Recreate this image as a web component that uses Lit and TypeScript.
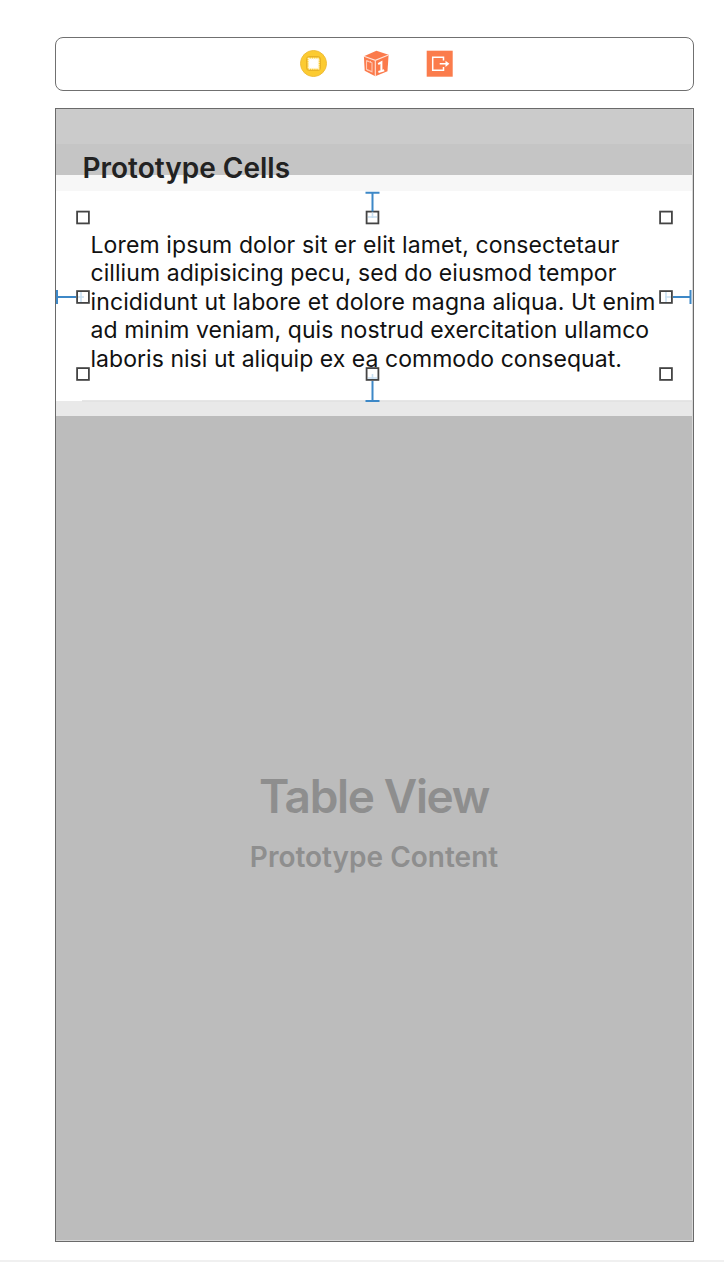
import { LitElement, html, css, svg } from "lit";
import { customElement } from "lit/decorators.js";

const LINES: [string, string][] = [
  ["Lorem ipsum dolor sit er elit lamet, consectetaur", "t1"],
  ["cillium adipisicing pecu, sed do eiusmod tempor", "t2"],
  ["incididunt ut labore et dolore magna aliqua. Ut enim", "t1"],
  ["ad minim veniam, quis nostrud exercitation ullamco", "t2"],
  ["laboris nisi ut aliquip ex ea commodo consequat.", "t3"],
];

const HANDLES = [
  [27, 26.5], [316.5, 26.5], [610, 26.5],
  [27, 106], [610, 106],
  [27, 183], [316.5, 183], [610, 183],
];

@customElement("scene-dock")
export class SceneDock extends LitElement {
  static styles = css`
    :host {
      box-sizing: border-box;
      display: flex;
      justify-content: center;
      align-items: center;
      gap: 36px;
      height: 54px;
      padding: 0 0 1px 3px;
      border: 1.5px solid #707070;
      border-radius: 8px;
      background: #fff;
    }
    svg { display: block; width: 27px; height: 27px; }
  `;
  render() {
    return html`
      <svg viewBox="0 0 27 27">
        <circle cx="13.5" cy="13.5" r="13" fill="#fccb31" stroke="#efbd3c" stroke-width="1" />
        <rect x="6.7" y="6.7" width="13.6" height="13.6" rx="2" fill="none" stroke="#e2ac25" stroke-width="1" />
        <rect x="8.6" y="8.6" width="10" height="10" fill="#fff" stroke="#fff5d2" stroke-width="1.8" stroke-dasharray="1.2 1" />
      </svg>
      <svg viewBox="0 0 27 27">
        <path d="M13.4 .8 25.6 4.8 24.5 21.3 12.2 26.2 1.7 20.8 .9 6.2Z" fill="#fb7a4b" />
        <path d="M1 6.3 12.3 10.3 25.4 5M12.3 10.3V26" fill="none" stroke="#ffe4d9" stroke-width="1.1" />
        <path d="M3.5 10.8 9 12.8V21.8L3.5 19.3Z" fill="none" stroke="#ffc9b4" stroke-width="1.1" />
        <path d="M4.8 11.5V10.3M7.5 12.4V11M5 20V21" fill="none" stroke="#ffc9b4" />
        <path d="M15.2 14.2 18.4 12.2V21.2M15.4 22 21.2 20.2" fill="none" stroke="#fff" stroke-width="2" />
      </svg>
      <svg viewBox="0 0 27 27">
        <rect x=".7" y=".7" width="26" height="26" fill="#fb7c4c" />
        <path d="M17.5 10.5V7.2H6.7V20.3H17.5V17M13.7 13.8H22" fill="none" stroke="#fff" stroke-width="1.5" />
        <path d="M19.5 10.7 23.4 13.8 19.5 16.9Z" fill="#fff" />
      </svg>
    `;
  }
}

@customElement("prototype-cell")
export class PrototypeCell extends LitElement {
  static styles = css`
    :host {
      box-sizing: border-box;
      display: block;
      position: relative;
      height: 210px;
      padding: 40px 0 0 34.5px;
      background: #fff;
    }
    .line {
      height: 28.4px;
      line-height: 28.4px;
      white-space: nowrap;
      font-size: 23px;
      color: #111;
    }
    .t1 { letter-spacing: 0.11px; }
    .t2 { letter-spacing: 0.065px; }
    .t3 { letter-spacing: 0.04px; }
    .overlay { position: absolute; left: 0; top: 0; width: 637px; height: 212px; }
  `;
  render() {
    return html`
      ${LINES.map(([t, c]) => html`<div class="line ${c}">${t}</div>`)}
      <svg class="overlay" viewBox="0 0 637 212">
        <path d="M26 209.8H637" stroke="#dedede" stroke-width="1.3" />
        ${HANDLES.map(([x, y]) => svg`<rect x=${x - 5.9} y=${y - 5.9} width="11.8" height="11.8" fill="#fff" fill-opacity=".85" stroke="#444" stroke-width="1.8" />`)}
        <path d="M309.5 1.7H323.5M316.5 2V20.5M309.5 210H323.5M316.5 209V190M1 99V113M1 106H20M634.5 99V113M634 106H617" fill="none" stroke="#3d88c7" stroke-width="2" />
        <path d="M316.5 21.5V27M312 26H321M316.5 188V183M312 187H321M22 106H28M25 101V111M615 106H609M610 101V111" fill="none" stroke="#c7dff2" stroke-width="1.6" />
      </svg>
    `;
  }
}

@customElement("app-root")
export class AppRoot extends LitElement {
  static styles = css`
    :host {
      box-sizing: border-box;
      display: flex;
      flex-direction: column;
      height: 1262px;
      padding: 37px 30px 0 55px;
      border-bottom: 2px solid #f0f0f0;
      background: #fff;
      font-family: Inter, "Liberation Sans", sans-serif;
    }
    .device {
      box-sizing: border-box;
      display: flex;
      flex-direction: column;
      height: 1134px;
      margin-top: 17px;
      border: 1px solid #6a6a6a;
      padding: 0 1px 1px 0;
      box-shadow: inset 0 0 0 1px #d8d8d8;
    }
    .status { height: 35px; background: #cbcbcb; }
    .header {
      height: 47px;
      line-height: 49px;
      padding-left: 26.5px;
      background: linear-gradient(#c5c5c5 31px, #f7f7f7 31px);
      font-size: 28px;
      font-weight: 600;
      color: #222;
      white-space: nowrap;
    }
    .footer { height: 15px; background: #e9e9e9; }
    .table {
      flex: 1;
      display: flex;
      flex-direction: column;
      align-items: center;
      justify-content: center;
      padding-bottom: 9px;
      background: #bcbcbc;
      color: #8e8e8e;
      font-weight: 600;
      white-space: nowrap;
    }
    .title { font-size: 46px; line-height: 66px; letter-spacing: -1.35px; }
    .subtitle { font-size: 28px; line-height: 56px; }
  `;
  render() {
    return html`
      <scene-dock></scene-dock>
      <div class="device">
        <div class="status"></div>
        <div class="header">Prototype Cells</div>
        <prototype-cell></prototype-cell>
        <div class="footer"></div>
        <div class="table">
          <div class="title">Table View</div>
          <div class="subtitle">Prototype Content</div>
        </div>
      </div>
    `;
  }
}
